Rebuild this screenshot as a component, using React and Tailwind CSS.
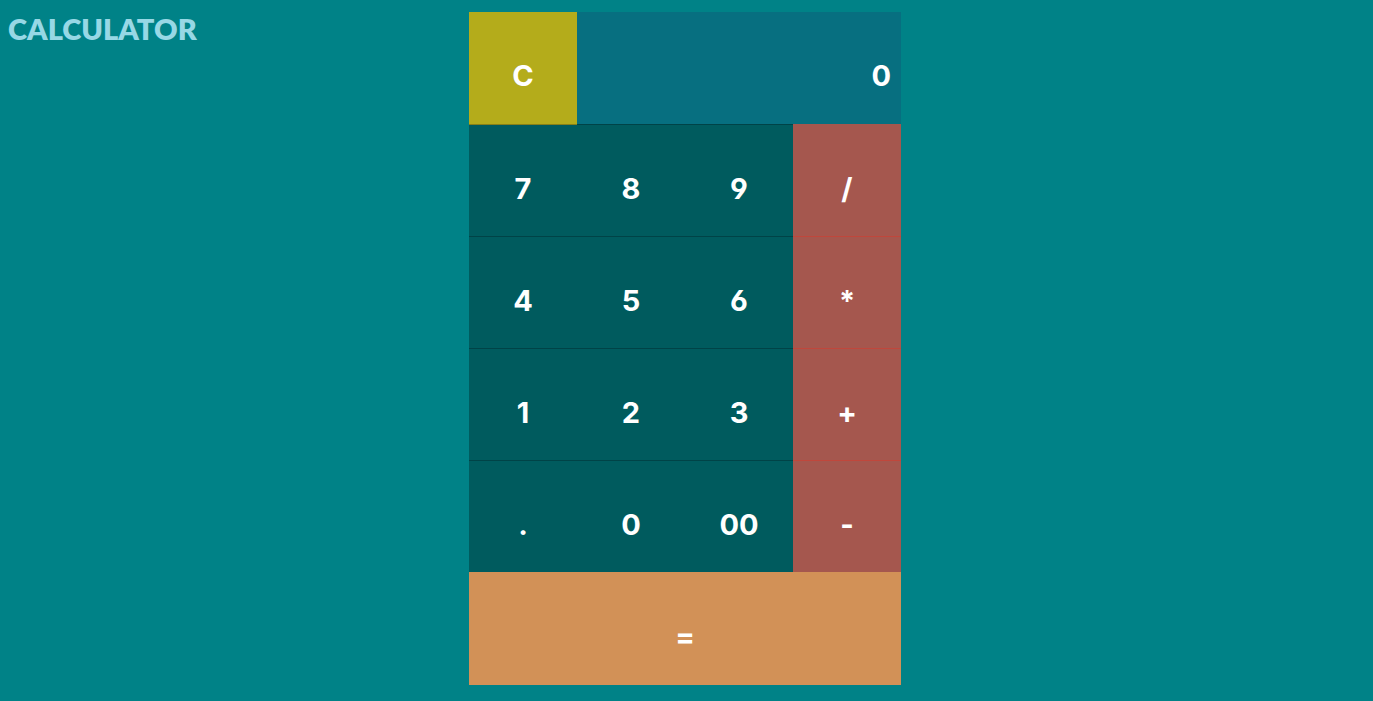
import { useState } from "react";

const NUMBER = "h-28 border-t border-[#004347] bg-[#005b5e]";
const OPERATOR = "h-28 border-t border-[#c0473c] bg-[#a5574e]";

const KEYS = [
  { label: "7", tone: NUMBER },
  { label: "8", tone: NUMBER },
  { label: "9", tone: NUMBER },
  { label: "/", tone: "h-28 border-t border-[#a5574e] bg-[#a5574e]", name: "Divide" },
  { label: "4", tone: NUMBER },
  { label: "5", tone: NUMBER },
  { label: "6", tone: NUMBER },
  { label: "*", tone: OPERATOR, name: "Multiply" },
  { label: "1", tone: NUMBER },
  { label: "2", tone: NUMBER },
  { label: "3", tone: NUMBER },
  { label: "+", tone: OPERATOR, name: "Add" },
  { label: ".", tone: NUMBER, name: "Decimal point" },
  { label: "0", tone: NUMBER },
  { label: "00", tone: NUMBER },
  { label: "-", tone: OPERATOR, name: "Subtract" },
];

function compute(a, op, b) {
  if (op === "+") return a + b;
  if (op === "-") return a - b;
  if (op === "*") return a * b;
  if (op === "/") return a / b;
  return b;
}

function Key({ label, name, tone, onPress }) {
  return (
    <button
      type="button"
      aria-label={name}
      onClick={() => onPress(label)}
      className={`flex cursor-pointer items-center justify-center pt-4 ${tone}`}
    >
      {label}
    </button>
  );
}

const EMPTY = { display: "0", stored: 0, op: null, fresh: true };

export default function App() {
  const [state, setState] = useState(EMPTY);

  function press(label) {
    setState((s) => {
      if (label === "C") return EMPTY;
      if ("/*+-=".includes(label)) {
        const result = s.fresh && label !== "=" ? Number(s.display) : compute(s.stored, s.op, Number(s.display));
        return { display: String(result), stored: result, op: label === "=" ? null : label, fresh: true };
      }
      if (label === "." && !s.fresh && s.display.includes(".")) return s;
      const base = s.fresh || s.display === "0" ? "" : s.display;
      const next = label === "." && base === "" ? "0." : base + label;
      return { ...s, display: next.replace(/^0+(?=\d)/, ""), fresh: false };
    });
  }

  return (
    <div className="grid min-h-screen grid-cols-[1fr_minmax(0,432px)_1fr] items-start bg-[#008287] pt-3 pr-[3px] pb-4 font-['Inter',sans-serif] text-[29px] leading-[34px] font-bold text-white [font-feature-settings:'cv03','cv04']">
      <h1 className="pl-2 font-['Lato',sans-serif] font-extrabold text-[#97d8e5]">CALCULATOR</h1>
      <main className="grid grid-cols-4">
        <Key
          label="C"
          name="Clear"
          tone="relative -mb-px h-[113px] border-b border-[#887f17] bg-[#b4ac1b]"
          onPress={press}
        />
        <output className="col-span-3 flex h-28 items-center justify-end overflow-hidden bg-[#076f80] pt-4 pr-[10px]">
          {state.display}
        </output>
        {KEYS.map((key) => (
          <Key key={key.label} {...key} onPress={press} />
        ))}
        <button
          type="button"
          aria-label="Equals"
          onClick={() => press("=")}
          className="col-span-4 flex h-[113px] cursor-pointer items-center justify-center bg-[#d29157] pt-4"
        >
          =
        </button>
      </main>
    </div>
  );
}
